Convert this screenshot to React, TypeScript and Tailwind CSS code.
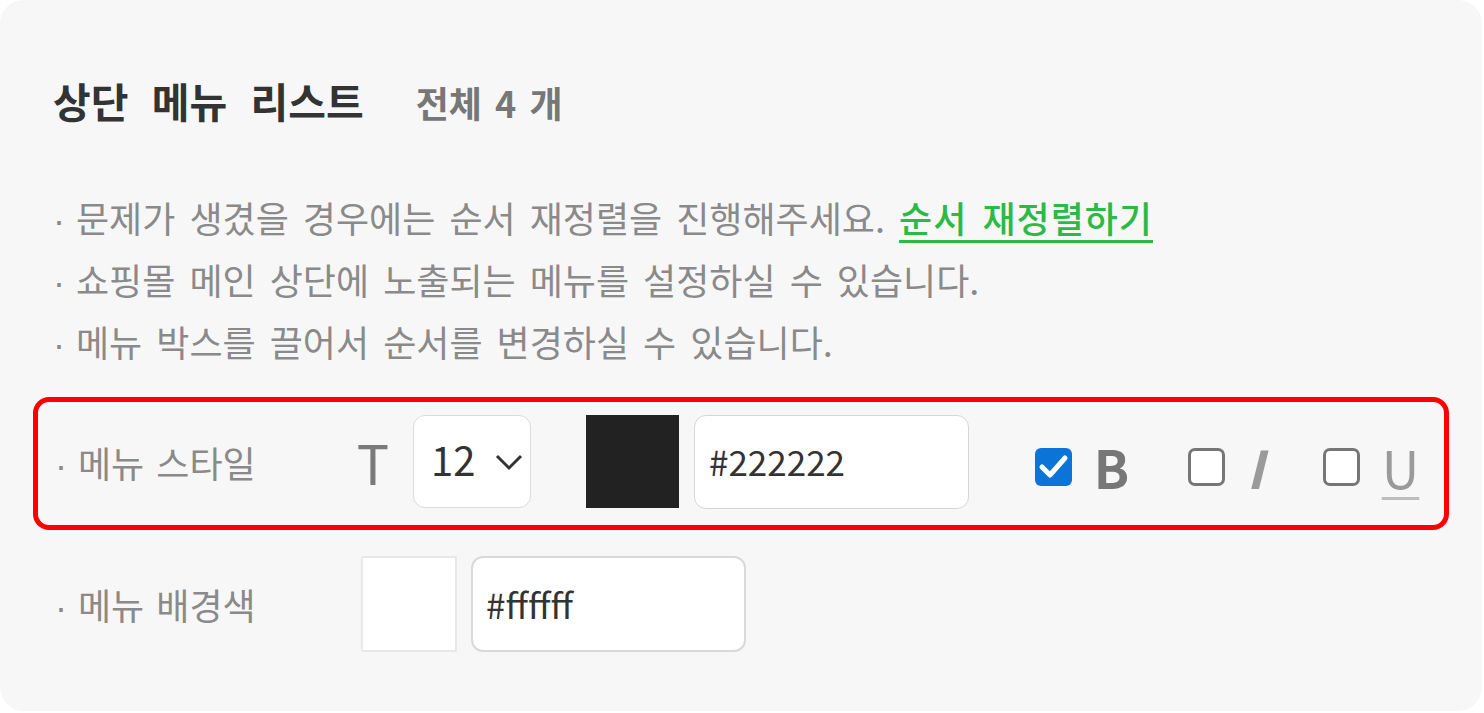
import React from "react";

function Check({ checked }: { checked?: boolean }) {
  if (checked) {
    return (
      <div className="w-[37px] h-[38px] rounded-[6px] bg-[#0b74d8] flex items-center justify-center">
        <svg width="37" height="38" viewBox="0 0 37 38">
          <polyline points="7,19 15,27 30,10" fill="none" stroke="#ffffff" strokeWidth="5" strokeLinecap="round" strokeLinejoin="round" />
        </svg>
      </div>
    );
  }
  return <div className="w-[37px] h-[38px] rounded-[7px] bg-white border-[3px] border-[#767676]" />;
}

function Dot() {
  return <span className="inline-block w-[23px] leading-none font-['Liberation_Sans',sans-serif]">·</span>;
}

export default function App() {
  return (
    <div className="w-[1484px] h-[713px] bg-white font-['Noto_Sans_CJK_KR','Noto_Sans_KR',sans-serif]">
      <div className="w-[1482px] h-[711px] bg-[#f7f7f7] rounded-[24px] px-[33px] pt-[76px]">
        <div className="flex items-baseline pl-[20px] h-[48px]">
          <span className="text-[41px] leading-[48px] font-bold text-[#333333] [word-spacing:14px]">상단 메뉴 리스트</span>
          <span className="ml-[52px] text-[36px] leading-[48px] font-bold text-[#777777] [word-spacing:5px]">전체 4 개</span>
        </div>

        <div className="mt-[62px] pl-[20px] text-[36px] leading-[62px] text-[#8a8a8a] [word-spacing:6px]">
          <p className="h-[62px]">
            <Dot />문제가 생겼을 경우에는 순서 재정렬을 진행해주세요.{" "}
            <a className="text-[#2cba46] font-medium tracking-[1px] underline decoration-[3px] underline-offset-[7px]">순서 재정렬하기</a>
          </p>
          <p className="h-[62px]"><Dot />쇼핑몰 메인 상단에 노출되는 메뉴를 설정하실 수 있습니다.</p>
          <p className="h-[62px]"><Dot />메뉴 박스를 끌어서 순서를 변경하실 수 있습니다.</p>
        </div>

        <div className="mt-[25px] h-[133px] border-[5px] border-[#ff0000] rounded-[16px] flex items-center pl-[17px] pb-[4px]">
          <div className="w-[303px] text-[36px] text-[#8a8a8a] [word-spacing:4px]"><Dot />메뉴 스타일</div>
          <div className="w-[30px] flex justify-center text-[54px] leading-none text-[#7a7a7a]">T</div>
          <div className="ml-[25px] w-[118px] h-[93px] bg-white border border-[#dcdcdc] rounded-[12px] flex items-center pl-[17px]">
            <span className="text-[40px] leading-none text-[#333333] pb-[6px]">12</span>
            <svg className="ml-[20px] mt-[2px]" width="28" height="17" viewBox="0 0 28 17">
              <polyline points="2,2 14,14 26,2" fill="none" stroke="#333333" strokeWidth="3" />
            </svg>
          </div>
          <div className="ml-[55px] w-[93px] h-[93px] bg-[#222222]" />
          <div className="ml-[15px] w-[275px] h-[94px] bg-white border border-[#d6d6d6] rounded-[12px] flex items-center pl-[14px] text-[35px] text-[#333333]">
            #222222
          </div>
          <div className="ml-[66px] flex items-center mt-[11px]">
            <Check checked />
            <div className="ml-[25px] w-[29px] flex justify-center text-[52px] leading-none font-bold text-[#777777]">B</div>
            <div className="ml-[62px]"><Check /></div>
            <div className="ml-[24px] w-[12px] flex justify-center text-[52px] leading-none font-semibold italic text-[#9a9a9a]">I</div>
            <div className="ml-[62px]"><Check /></div>
            <div className="ml-[24px] w-[33px] flex justify-center text-[52px] leading-none text-[#9a9a9a] underline decoration-[3px] underline-offset-[8px] decoration-[#bdbdbd]">U</div>
          </div>
        </div>

        <div className="mt-[26px] h-[96px] flex items-center pl-[22px]">
          <div className="w-[306px] text-[36px] text-[#8a8a8a] [word-spacing:4px]"><Dot />메뉴 배경색</div>
          <div className="w-[96px] h-[96px] bg-white border-2 border-[#e8e8e8]" />
          <div className="ml-[14px] w-[275px] h-[96px] bg-white border-2 border-[#d9d9d9] rounded-[12px] flex items-center pl-[13px] text-[35px] text-[#333333]">
            #ffffff
          </div>
        </div>
      </div>
    </div>
  );
}
